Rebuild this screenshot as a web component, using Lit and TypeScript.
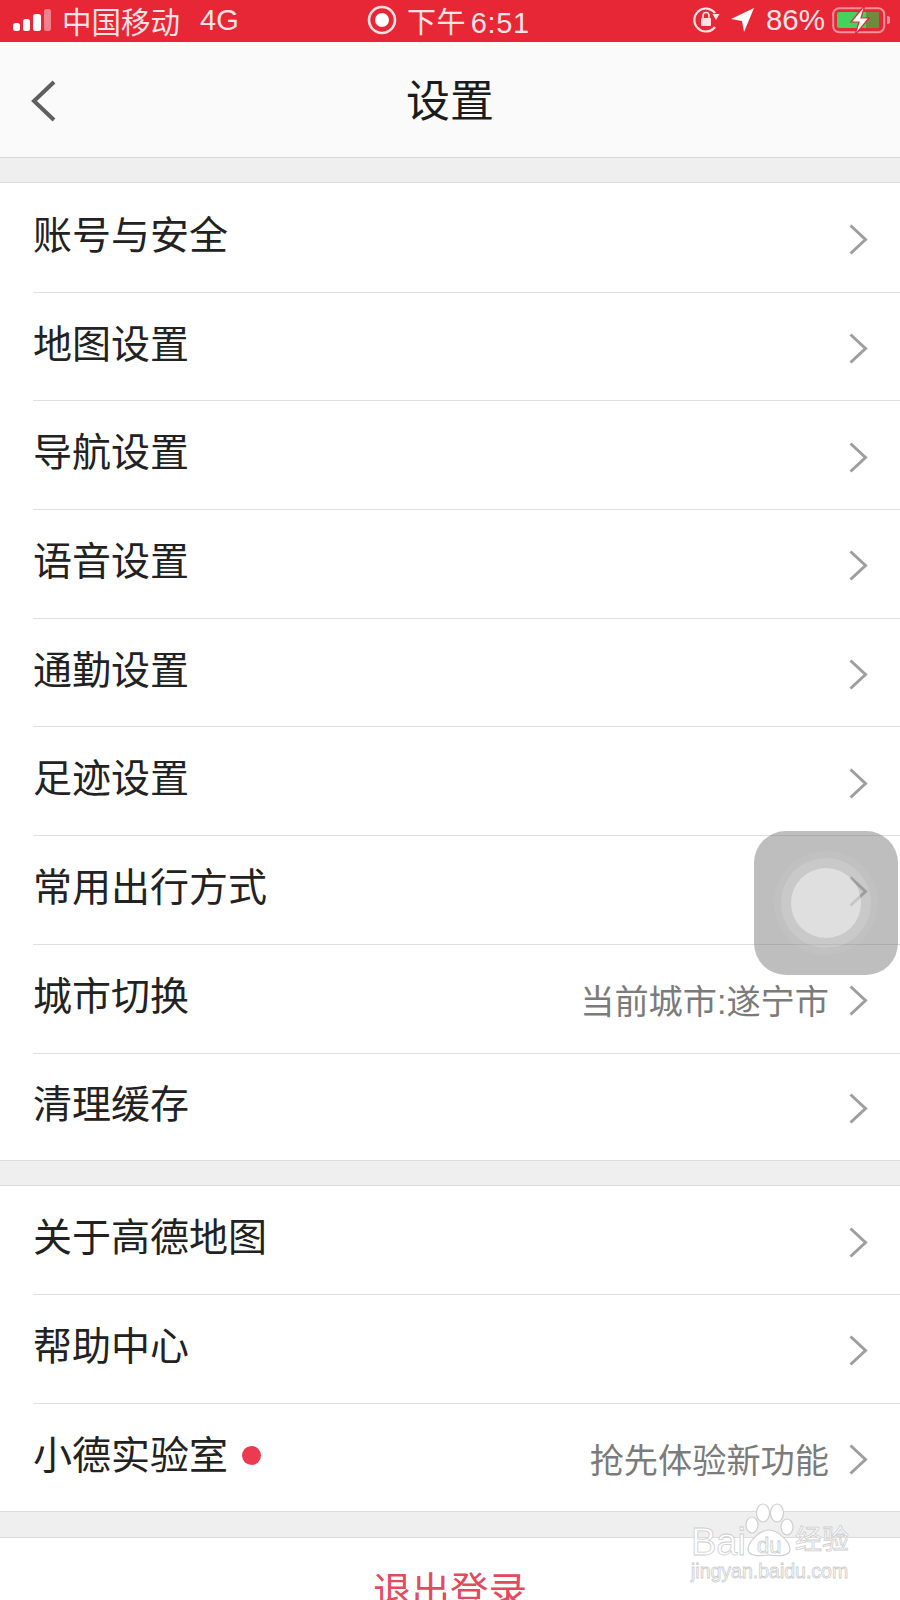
import { LitElement, html, css, svg } from 'lit';
import { customElement } from 'lit/decorators.js';

type Row = { label: string; value?: string; dot?: boolean };

const mainRows: Row[] = [
  { label: '账号与安全' },
  { label: '地图设置' },
  { label: '导航设置' },
  { label: '语音设置' },
  { label: '通勤设置' },
  { label: '足迹设置' },
  { label: '常用出行方式' },
  { label: '城市切换', value: '当前城市:遂宁市' },
  { label: '清理缓存' },
];

const aboutRows: Row[] = [
  { label: '关于高德地图' },
  { label: '帮助中心' },
  { label: '小德实验室', value: '抢先体验新功能', dot: true },
];

const chevron = svg`<path d="M1.5 2.5 L16.5 16.5 L1.5 30.5" fill="none" stroke="#9e9e9e" stroke-width="3"/>`;

@customElement('app-root')
export class AppRoot extends LitElement {
  static styles = css`
    :host {
      display: block;
      position: relative;
      width: 900px;
      height: 1600px;
      overflow: hidden;
      background: #efefef;
      font-family: "Liberation Sans", "Noto Sans CJK SC", sans-serif;
    }

    .status {
      height: 42px;
      background: #e72636;
      color: #fbe3e5;
      display: flex;
      align-items: center;
      padding: 0 10px 2px 12px;
      box-sizing: border-box;
      position: relative;
      font-size: 28px;
    }
    .signal { display: block; margin-right: 10px; }
    .carrier { font-size: 29.5px; width: 138px; white-space: nowrap; }
    .net { font-size: 29px; }
    .status-center {
      position: absolute;
      left: 367px;
      top: 0;
      height: 40px;
      display: flex;
      align-items: center;
      gap: 10px;
      font-size: 29px;
      white-space: nowrap;
    }
    .time { letter-spacing: 0.6px; word-spacing: -4px; }
    .status-right {
      margin-left: auto;
      display: flex;
      align-items: center;
      gap: 10px;
    }
    .pct { font-size: 29.5px; margin-right: -3px; }

    .nav {
      height: 115px;
      background: #fafafa;
      border-bottom: 1px solid #d6d6d6;
      display: flex;
      align-items: center;
      justify-content: center;
      position: relative;
      font-size: 44px;
      color: #1c1c1c;
    }
    .nav span { margin-top: -3px; }
    .back { position: absolute; left: 30px; top: 37px; }

    .group {
      background: #fff;
      border-top: 1px solid #dcdcdc;
      border-bottom: 1px solid #dcdcdc;
      margin-top: 24px;
    }
    .group.main { padding-top: 1px; }
    .row {
      height: 108.7px;
      box-sizing: border-box;
      margin-left: 33px;
      padding: 0 32px 12px 0;
      border-bottom: 1px solid #dfdfdf;
      display: flex;
      align-items: center;
      color: #222;
      font-size: 39px;
    }
    .row:last-child { border-bottom: 0; height: 106.8px; }
    .group.about .row:last-child { height: 107.8px; }
    .dot {
      width: 19px;
      height: 19px;
      border-radius: 50%;
      background: #ee3a50;
      margin-left: 14px;
      margin-top: 8px;
    }
    .value {
      margin-left: auto;
      color: #7b7b7b;
      font-size: 34.2px;
      margin-top: 12px;
      white-space: nowrap;
    }
    .chevron { margin-left: auto; margin-top: 16px; display: block; }
    .value + .chevron { margin-left: 20px; }

    .logout {
      height: 89px;
      background: #fff;
      border-top: 1px solid #dcdcdc;
      margin-top: 25px;
      display: flex;
      justify-content: center;
      padding-top: 22px;
      box-sizing: border-box;
      color: #e34a5e;
      font-size: 38.5px;
    }

    .assistive {
      position: absolute;
      left: 754px;
      top: 831px;
      width: 144px;
      height: 144px;
      border-radius: 32px;
      background: rgba(110, 110, 110, 0.45);
      display: flex;
      align-items: center;
      justify-content: center;
    }
    .ring-outer {
      width: 104px;
      height: 104px;
      border-radius: 50%;
      background: rgba(255, 255, 255, 0.05);
      display: flex;
      align-items: center;
      justify-content: center;
    }
    .ring-mid {
      width: 90px;
      height: 90px;
      border-radius: 50%;
      background: rgba(255, 255, 255, 0.13);
      display: flex;
      align-items: center;
      justify-content: center;
    }
    .ring-core {
      width: 70px;
      height: 70px;
      border-radius: 50%;
      background: rgba(255, 255, 255, 0.42);
    }

    .mark {
      position: absolute;
      left: 690px;
      top: 1502px;
      width: 200px;
      height: 90px;
      color: #fff;
      -webkit-text-stroke: 0.8px #cdcdcd;
    }
    .mark svg { position: absolute; left: 0; top: 0; }
    .mark-bai {
      position: absolute;
      left: 1px;
      top: 20px;
      font-size: 38px;
      line-height: 40px;
    }
    .mark-du {
      position: absolute;
      left: 67px;
      top: 32px;
      font-size: 22px;
      line-height: 24px;
    }
    .mark-cn {
      position: absolute;
      left: 105px;
      top: 22px;
      font-size: 27px;
      line-height: 32px;
      white-space: nowrap;
    }
    .mark-url {
      position: absolute;
      left: 1px;
      top: 57px;
      font-size: 19.5px;
      line-height: 24px;
      white-space: nowrap;
    }
  `;

  private renderRow(r: Row) {
    return html`
      <div class="row">
        <span>${r.label}</span>
        ${r.dot ? html`<span class="dot"></span>` : ''}
        ${r.value ? html`<span class="value">${r.value}</span>` : ''}
        <svg class="chevron" width="19" height="33" viewBox="0 0 19 33">${chevron}</svg>
      </div>
    `;
  }

  private renderStatus() {
    return html`
      <div class="status">
        <svg class="signal" width="40" height="24" viewBox="0 0 40 24">
          <rect x="1" y="15" width="7" height="8" rx="2.5" fill="#fff"/>
          <rect x="11" y="11" width="7" height="12" rx="2.5" fill="#fff"/>
          <rect x="21" y="6" width="8" height="17" rx="2.5" fill="#fff"/>
          <rect x="32" y="1" width="7" height="22" rx="2.5" fill="#f3808a"/>
        </svg>
        <span class="carrier">中国移动</span>
        <span class="net">4G</span>
        <div class="status-center">
          <svg width="30" height="30" viewBox="0 0 30 30">
            <circle cx="15" cy="15" r="13" fill="none" stroke="#fbe3e5" stroke-width="2.6"/>
            <circle cx="15" cy="15" r="7" fill="#fff"/>
          </svg>
          <span class="time">下午 6:51</span>
        </div>
        <div class="status-right">
          <svg width="27" height="28" viewBox="0 0 27 28">
            <path d="M22 21 A11.5 11.5 0 1 1 22 7" fill="none" stroke="#fbe3e5" stroke-width="2.2"/>
            <path d="M19.5 8 L26.5 8 L23 14 Z" fill="#fbe3e5"/>
            <rect x="8" y="12" width="10" height="8" rx="1" fill="#fbe3e5"/>
            <path d="M10 12 V9.5 a3 3 0 0 1 6 0 V12" fill="none" stroke="#fbe3e5" stroke-width="1.6"/>
          </svg>
          <svg width="26" height="26" viewBox="0 0 24 26">
            <path d="M23 1 L13 25 L11 14 L0 12 Z" fill="#fff"/>
          </svg>
          <span class="pct">86%</span>
          <svg width="58" height="30" viewBox="0 0 58 30">
            <rect x="1.2" y="3.2" width="51" height="24" rx="6" fill="none" stroke="#f2909a" stroke-width="2"/>
            <rect x="5" y="7" width="40" height="16" rx="2" fill="#43d25c"/>
            <rect x="34" y="7" width="13" height="16" fill="#6e8a3c"/>
            <path d="M55 11 a4 4 0 0 1 0 8 Z" fill="#f2909a"/>
            <path d="M33 0 L19 17 L27 17 L23 30 L37 13 L29 13 Z" fill="#fff" stroke="#e72636" stroke-width="1.2"/>
          </svg>
        </div>
      </div>
    `;
  }

  private renderWatermark() {
    return html`
      <div class="mark">
        <svg width="200" height="70" viewBox="0 0 200 70">
          <g fill="#fff" stroke="#cfcfcf" stroke-width="1.2">
            <ellipse cx="62" cy="23" rx="6" ry="8"/>
            <ellipse cx="73" cy="11" rx="6.5" ry="9"/>
            <ellipse cx="87" cy="11" rx="6.5" ry="9"/>
            <ellipse cx="97" cy="25" rx="6" ry="8"/>
            <path d="M79 28 C88 28 100 40 100 47 C100 55 88 54 79 53 C70 54 58 55 58 47 C58 40 70 28 79 28 Z"/>
          </g>
        </svg>
        <span class="mark-bai">Bai</span>
        <span class="mark-du">du</span>
        <span class="mark-cn">经验</span>
        <span class="mark-url">jingyan.baidu.com</span>
      </div>
    `;
  }

  render() {
    return html`
      ${this.renderStatus()}
      <div class="nav">
        <svg class="back" width="30" height="44" viewBox="0 0 30 44">
          <path d="M24 3 L4 22 L24 41" fill="none" stroke="#5f5f5f" stroke-width="4"/>
        </svg>
        <span>设置</span>
      </div>
      <div class="group main">${mainRows.map(r => this.renderRow(r))}</div>
      <div class="group about">${aboutRows.map(r => this.renderRow(r))}</div>
      <div class="logout">退出登录</div>
      <div class="assistive">
        <div class="ring-outer"><div class="ring-mid"><div class="ring-core"></div></div></div>
      </div>
      ${this.renderWatermark()}
    `;
  }
}
